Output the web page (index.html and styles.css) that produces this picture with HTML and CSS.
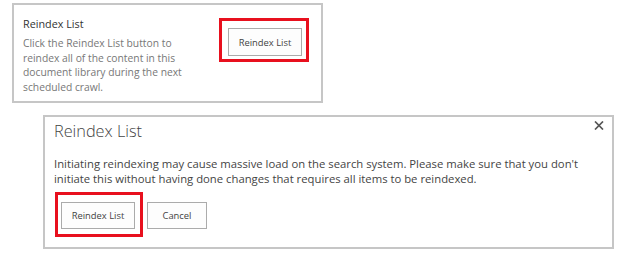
FILE: index.html
```html
<!DOCTYPE html>
<html lang="en">
<head>
    <meta charset="UTF-8">
    <title>Reindex List</title>
    <link rel="stylesheet" href="styles.css">
</head>
<body>
    <!-- Library settings section -->
    <div class="section">
        <div class="section-text">
            <div class="section-title">Reindex List</div>
            <p class="section-desc">Click the Reindex List button to reindex all of the content in this document library during the next scheduled crawl.</p>
        </div>
        <div class="highlight highlight-top">
            <button class="btn">Reindex List</button>
        </div>
    </div>

    <!-- Confirmation dialog -->
    <div class="dialog">
        <div class="dialog-head">
            <div class="dialog-title">Reindex List</div>
            <svg class="dialog-close" width="10" height="9" viewBox="0 0 10 9">
                <path d="M1 0.5 L9 8.5 M9 0.5 L1 8.5" stroke="#555" stroke-width="1.7" fill="none"/>
            </svg>
        </div>
        <p class="dialog-msg">Initiating reindexing may cause massive load on the search system. Please make sure that you don't initiate this without having done changes that requires all items to be reindexed.</p>
        <div class="dialog-actions">
            <div class="highlight highlight-bottom">
                <button class="btn">Reindex List</button>
            </div>
            <button class="btn btn-cancel">Cancel</button>
        </div>
    </div>
</body>
</html>
```

FILE: styles.css
```css
* {
    margin: 0;
    padding: 0;
    box-sizing: border-box;
}

body {
    background-color: #fff;
    color: #444;
    font-family: "Open Sans", Arial, sans-serif;
}

/* Settings section */
.section {
    display: flex;
    justify-content: space-between;
    align-items: flex-start;
    width: 311px;
    height: 100px;
    margin: 3px 0 0 12px;
    padding: 11px 12px 0 9px;
    border: 2px solid #c6c6c6;
}

.section-title {
    font-size: 10.8px;
    line-height: 16px;
    color: #333;
}

.section-desc {
    width: 165px;
    margin-top: 4px;
    font-size: 10.3px;
    line-height: 14.5px;
    color: #777;
}

.highlight {
    border: 3px solid #e8101e;
}

.highlight-top {
    margin-top: 2px;
    padding: 7px 4px 3px 6px;
}

.btn {
    width: 74px;
    height: 28px;
    background-color: #fdfdfd;
    border: 1px solid #ababab;
    color: #444;
    font-family: "Open Sans", Arial, sans-serif;
    font-size: 9.4px;
}

/* Dialog */
.dialog {
    width: 571px;
    height: 134px;
    margin: 12px 0 0 43px;
    padding: 3px 8px 0 9px;
    border: 2px solid #c6c6c6;
}

.dialog-head {
    display: flex;
    justify-content: space-between;
    align-items: flex-start;
}

.dialog-title {
    font-size: 16.3px;
    font-weight: 300;
    line-height: 22px;
    color: #444;
}

.dialog-close {
    margin-top: 1px;
}

.dialog-msg {
    width: 540px;
    margin-top: 14px;
    font-size: 11.3px;
    line-height: 15px;
    color: #444;
}

.dialog-actions {
    display: flex;
    align-items: flex-start;
    margin-top: 6px;
}

.highlight-bottom {
    padding: 7px 5px 5px 3px;
    margin-left: 1px;
}

.highlight-bottom .btn {
    height: 27px;
}

.btn-cancel {
    width: 60px;
    height: 27px;
    margin: 10px 0 0 4px;
}
```
